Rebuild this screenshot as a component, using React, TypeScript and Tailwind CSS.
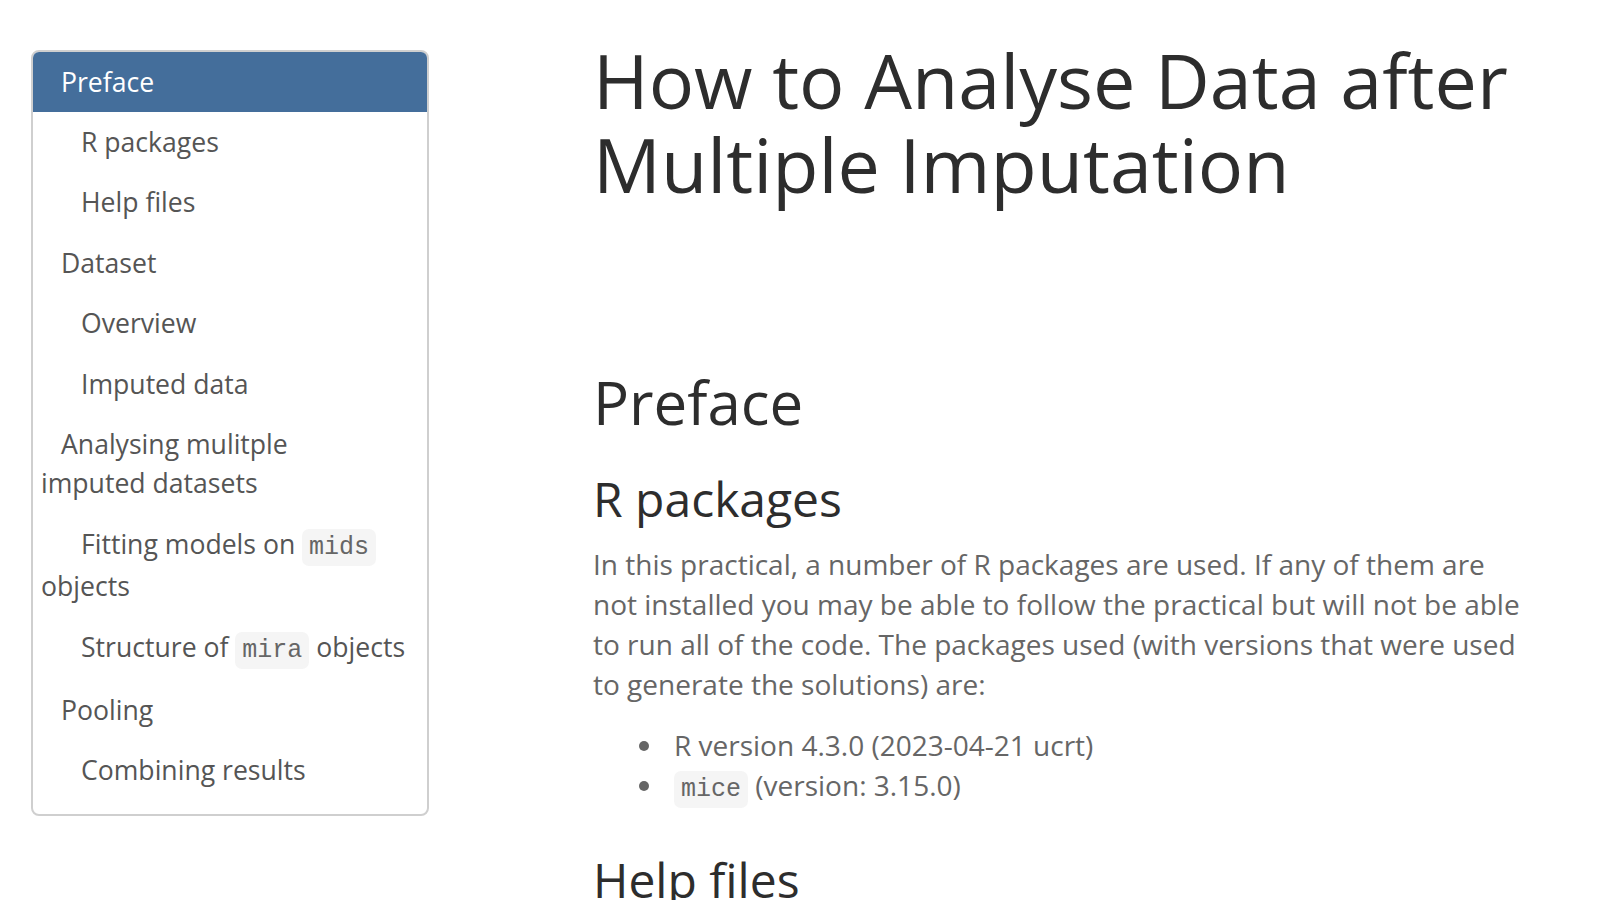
const tocItems: {
  label: React.ReactNode;
  level: 0 | 1;
  active?: boolean;
  nowrap?: boolean;
}[] = [
  { label: "Preface", level: 0, active: true },
  { label: "R packages", level: 1 },
  { label: "Help files", level: 1 },
  { label: "Dataset", level: 0 },
  { label: "Overview", level: 1 },
  { label: "Imputed data", level: 1 },
  { label: "Analysing mulitple imputed datasets", level: 0 },
  {
    label: (
      <>
        Fitting models on <Code>mids</Code> objects
      </>
    ),
    level: 1,
  },
  {
    label: (
      <>
        Structure of <Code>mira</Code> objects
      </>
    ),
    level: 1,
    nowrap: true,
  },
  { label: "Pooling", level: 0 },
  { label: "Combining results", level: 1 },
];

function Code({ children }: { children: React.ReactNode }) {
  return (
    <code className="rounded-[7px] bg-[#f5f5f5] px-[7px] py-[4px] font-['Liberation_Mono','Courier_New',monospace] text-[25px] text-[#666]">
      {children}
    </code>
  );
}

export default function App() {
  return (
    <div className="flex min-h-[900px] bg-white pl-[31px] font-['Open_Sans',sans-serif] text-[28px] leading-[40px] text-[#666]">
      <nav className="mt-[50px] w-[398px] shrink-0 self-start text-[26.6px] leading-[39.4px]">
        <ul className="overflow-hidden rounded-[8px] border-2 border-[#cfcfcf] pb-[13px]">
          {tocItems.map((item, i) => (
            <li
              key={i}
              className={`py-[10.5px] pl-[8px] pr-[34px] ${
                item.level === 0 ? "indent-[20px]" : "indent-[40px]"
              } ${item.nowrap ? "whitespace-nowrap" : ""} ${
                item.active ? "bg-[#446e9b] text-white" : "text-[#555]"
              }`}>
              {item.label}
            </li>
          ))}
        </ul>
      </nav>

      <main className="ml-[164px] w-[934px] shrink-0">
        <h1 className="mt-[38px] text-[75.5px] leading-[84px] font-normal text-[#2d2d2d]">
          How to Analyse Data after Multiple Imputation
        </h1>

        <h1 className="mt-[164px] text-[60px] leading-[64px] font-normal text-[#2d2d2d]">
          Preface
        </h1>

        <h2 className="mt-[38px] text-[48px] leading-[54px] font-normal text-[#2d2d2d]">
          R packages
        </h2>
        <p className="mt-[18px]">
          In this practical, a number of R packages are used. If any of them are
          not installed you may be able to follow the practical but will not be
          able to run all of the code. The packages used (with versions that
          were used to generate the solutions) are:
        </p>
        <ul className="mt-[21px] list-disc pl-[73px] marker:text-[#666]">
          <li className="pl-[8px]">R version 4.3.0 (2023-04-21 ucrt)</li>
          <li className="pl-[8px]">
            <Code>mice</Code> (version: 3.15.0)
          </li>
        </ul>

        <h2 className="mt-[43px] text-[48px] leading-[54px] font-normal text-[#2d2d2d]">
          Help files
        </h2>
      </main>
    </div>
  );
}
